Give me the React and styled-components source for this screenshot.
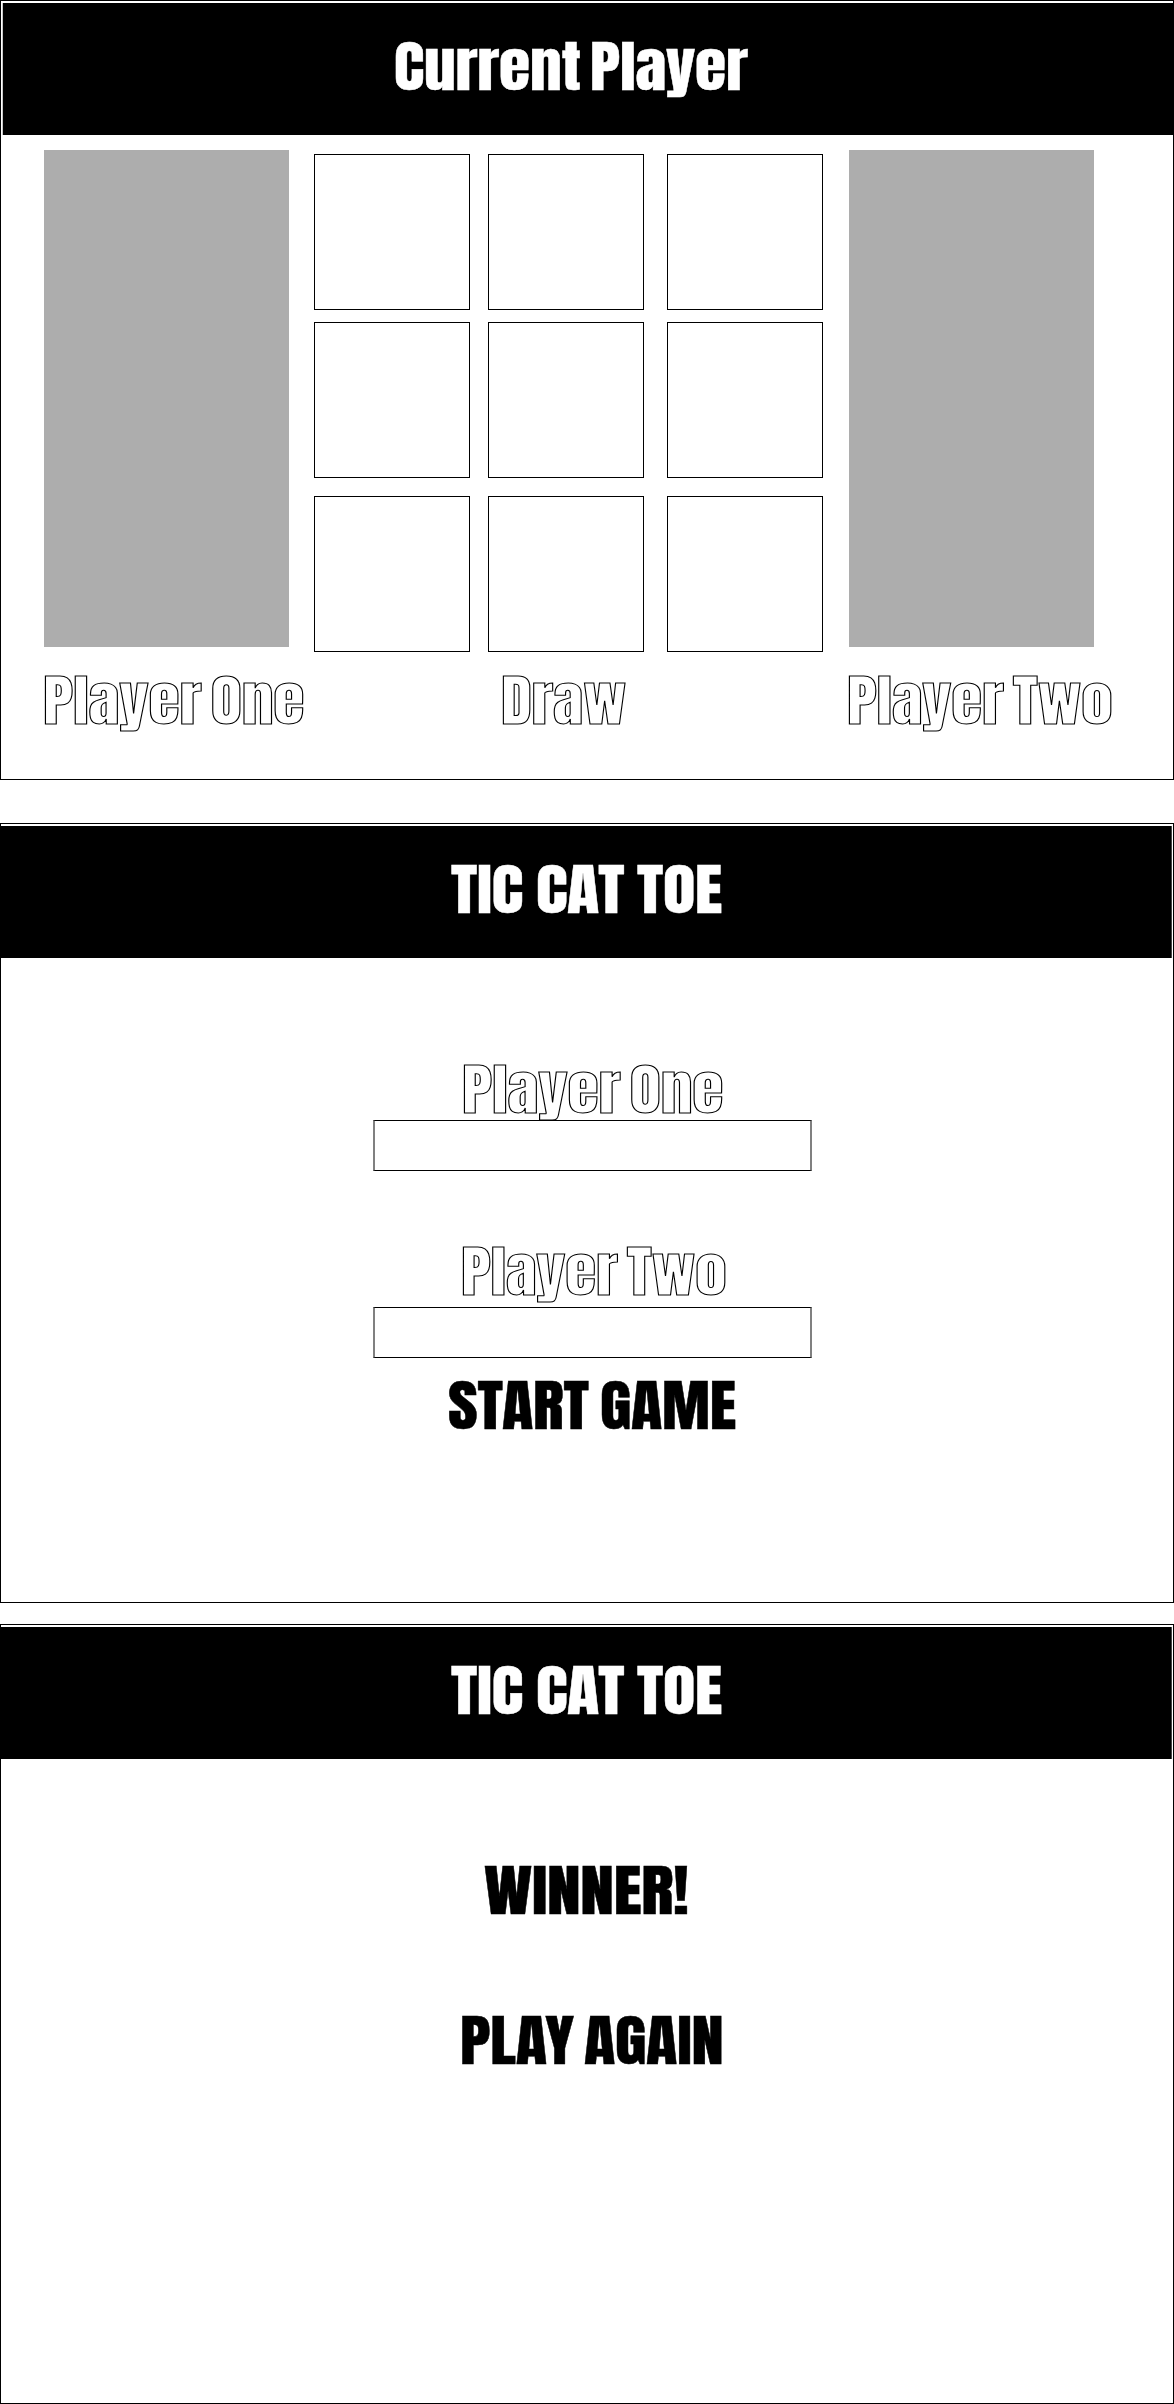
import React from "react";
import styled, { createGlobalStyle } from "styled-components";

const GlobalStyle = createGlobalStyle`
  body {
    margin: 0;
    background: #fff;
  }
`;

const Page = styled.main`
  width: 1174px;
  height: 2404px;
  display: flex;
  flex-direction: column;
  overflow: hidden;
`;

const Screen = styled.section`
  box-sizing: border-box;
  width: 1174px;
  height: 780px;
  flex: none;
  margin-bottom: ${(p) => p.$after || 0}px;
  border: 1px solid #000;
  background: #fff;
`;

const Header = styled.header`
  box-sizing: border-box;
  height: 132px;
  margin: 2px 1px 0 0;
  padding-bottom: 4px;
  display: flex;
  align-items: center;
  justify-content: center;
  background: #000;
  color: #fff;
  border-right: 1px solid #444;
`;

const GameHeader = styled(Header)`
  margin: 2px 0 0 1px;
  padding-right: 33px;
  border-right: 0;
  border-left: 1px solid #c8c8c8;
`;

const Heading = styled.div`
  width: ${(p) => p.$width}px;
  height: 60px;
  margin: 0;
  flex: none;
  font-family: Impact, Anton, "Open Sans", sans-serif;
  font-size: 55px;
  font-weight: 400;
  line-height: 60px;
  white-space: nowrap;
`;

const Lettering = styled.span`
  display: inline-block;
  transform: scaleX(${(p) => p.$stretch});
  transform-origin: 0 50%;
  letter-spacing: -0.2px;
  word-spacing: ${(p) => p.$space || 0}px;
`;

const Solid = styled(Lettering)`
  -webkit-text-stroke: 0.4px currentColor;
`;

const Outlined = styled(Lettering)`
  color: #fff;
  -webkit-text-stroke: 1px #000;
`;

const Arena = styled.div`
  display: flex;
  align-items: flex-start;
  height: 502px;
  margin-top: 15px;
  padding-left: 43px;
`;

const PlayerPanel = styled.div`
  width: 245px;
  height: 497px;
  background: #adadad;
`;

const Board = styled.div`
  display: grid;
  grid-template-columns: 174px 179px 156px;
  grid-template-rows: 168px 174px 156px;
  margin: 4px 26px 0 25px;
`;

const Cell = styled.div`
  box-sizing: border-box;
  width: 156px;
  height: 156px;
  border: 1px solid #000;
`;

const ScoreRow = styled.div`
  display: grid;
  grid-template-columns: 457.8px 346px 1fr;
  margin-top: 19px;
  padding-left: 41.8px;
`;

const Column = styled.div`
  display: flex;
  flex-direction: column;
  align-items: center;
  margin-left: 11px;
  padding-top: 102px;
`;

const NameInput = styled.input`
  box-sizing: border-box;
  width: 439px;
  height: 51px;
  margin: ${(p) => p.$top}px 0 ${(p) => p.$bottom}px;
  padding: 0 12px;
  border: solid;
  border-width: 1px 2px;
  border-color: #000 #808080;
  border-radius: 0;
  outline: none;
  background: transparent;
  font: 24px Roboto, sans-serif;
`;

const Spacer = styled.div`
  height: 90px;
`;

function Title() {
  return (
    <Header>
      <Heading as="h1" $width={270.6}>
        <Solid $stretch={1.206} $space={-2}>TIC CAT TOE</Solid>
      </Heading>
    </Header>
  );
}

function PlayerOne() {
  return (
    <Heading $width={260.4}>
      <Outlined $stretch={1.163} $space={-4.7}>Player One</Outlined>
    </Heading>
  );
}

function PlayerTwo() {
  return (
    <Heading $width={263.8}>
      <Outlined $stretch={1.149} $space={-4.7}>Player Two</Outlined>
    </Heading>
  );
}

export default function App() {
  return (
    <>
      <GlobalStyle />
      <Page>
        <Screen $after={43}>
          <GameHeader>
            <Heading $width={355.8}>
              <Solid $stretch={1.157} $space={-4.5}>Current Player</Solid>
            </Heading>
          </GameHeader>
          <Arena>
            <PlayerPanel />
            <Board>
              {Array.from({ length: 9 }, (_, i) => (
                <Cell key={i} />
              ))}
            </Board>
            <PlayerPanel />
          </Arena>
          <ScoreRow>
            <PlayerOne />
            <Heading $width={125}>
              <Outlined $stretch={1.136}>Draw</Outlined>
            </Heading>
            <PlayerTwo />
          </ScoreRow>
        </Screen>

        <Screen $after={21}>
          <Title />
          <Column>
            <PlayerOne />
            <NameInput aria-label="Player One" $top={0} $bottom={71} />
            <PlayerTwo />
            <NameInput aria-label="Player Two" $top={5} $bottom={18} />
            <Heading $width={288.6}>
              <Solid $stretch={1.171} $space={-3}>START GAME</Solid>
            </Heading>
          </Column>
        </Screen>

        <Screen>
          <Title />
          <Column>
            <Heading $width={218}>
              <Solid $stretch={1.229}>WINNER!</Solid>
            </Heading>
            <Spacer />
            <Heading $width={264.4}>
              <Solid $stretch={1.173} $space={-4}>PLAY AGAIN</Solid>
            </Heading>
          </Column>
        </Screen>
      </Page>
    </>
  );
}
